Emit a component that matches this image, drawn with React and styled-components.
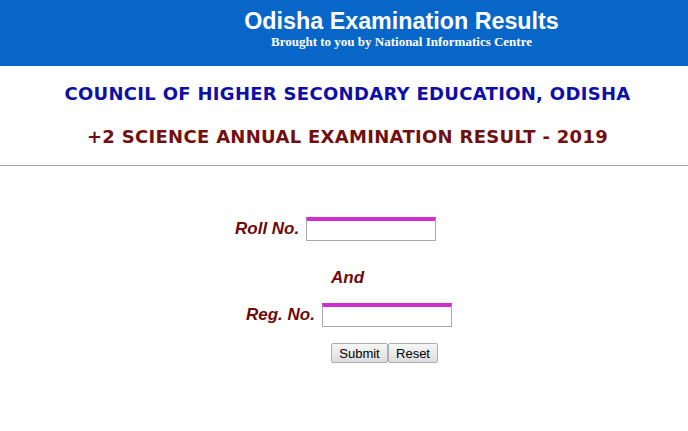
import React from "react";
import styled, { createGlobalStyle } from "styled-components";

const GlobalStyle = createGlobalStyle`
  body {
    margin: 0;
    background: #fff;
    font-family: "Liberation Sans", Arial, sans-serif;
  }
`;

const Header = styled.header`
  background-color: #0866c9;
  height: 66px;
  display: flex;
  flex-direction: column;
  align-items: center;
  padding-left: 115px;
  box-sizing: border-box;
`;

const SiteTitle = styled.h1`
  margin: 8px 0 0;
  font-family: "Liberation Sans", Arial, sans-serif;
  font-size: 23.3px;
  line-height: 27px;
  font-weight: bold;
  color: #fff;
`;

const SiteSub = styled.div`
  font-family: "Liberation Serif", "Times New Roman", serif;
  font-weight: bold;
  font-size: 13px;
  line-height: 14px;
  color: #fff;
`;

const Heading = styled.div`
  border-bottom: 1px solid #a0a0a0;
  padding: 17px 0 17px;
  display: flex;
  flex-direction: column;
  align-items: center;
  gap: 21px;
`;

const HeadLine = styled.h2`
  margin: 0;
  font-family: "DejaVu Sans", Verdana, sans-serif;
  font-weight: bold;
  font-size: 18px;
  line-height: 22px;
  letter-spacing: 0.3px;
  color: ${p => p.color};
  padding-left: 7px;
`;

const Form = styled.form`
  display: flex;
  flex-direction: column;
  padding-top: 51px;
`;

const Row = styled.div`
  display: flex;
  align-items: flex-end;
  padding-left: ${p => p.left}px;
  margin-bottom: ${p => p.gap || 0}px;
`;

const Label = styled.label`
  font-family: "Liberation Sans", Arial, sans-serif;
  font-weight: bold;
  font-style: italic;
  font-size: 17px;
  line-height: 20px;
  color: #6e0a0a;
  margin-right: 7px;
  padding-bottom: 2px;
`;

const TextInput = styled.input`
  width: 130px;
  height: 24px;
  box-sizing: border-box;
  border: 1px solid #a9a9a9;
  border-top: 4px solid #cf2fcf;
  padding: 0 3px;
  margin: 0;
  outline: none;
  background: #fff;
`;

const Button = styled.button`
  font-family: "Liberation Sans", Arial, sans-serif;
  font-size: 13px;
  height: 20px;
  padding: 0 6px;
  margin: 0;
  border: 1px solid #adadad;
  border-radius: 2px;
  background: linear-gradient(#f6f6f6, #dddddd);
  color: #000;
  width: ${p => p.w}px;
`;

export default function App() {
  return (
    <>
      <GlobalStyle />
      <Header>
        <SiteTitle>Odisha Examination Results</SiteTitle>
        <SiteSub>Brought to you by National Informatics Centre</SiteSub>
      </Header>
      <Heading>
        <HeadLine color="#0f0fa6">COUNCIL OF HIGHER SECONDARY EDUCATION, ODISHA</HeadLine>
        <HeadLine color="#720f0f">+2 SCIENCE ANNUAL EXAMINATION RESULT - 2019</HeadLine>
      </Heading>
      <Form onSubmit={e => e.preventDefault()}>
        <Row left={235} gap={27}>
          <Label>Roll No.</Label>
          <TextInput type="text" />
        </Row>
        <Row left={331} gap={13}>
          <Label as="span">And</Label>
        </Row>
        <Row left={246} gap={16}>
          <Label>Reg. No.</Label>
          <TextInput type="text" />
        </Row>
        <Row left={331}>
          <Button type="submit" w={57}>Submit</Button>
          <Button type="reset" w={50}>Reset</Button>
        </Row>
      </Form>
    </>
  );
}
